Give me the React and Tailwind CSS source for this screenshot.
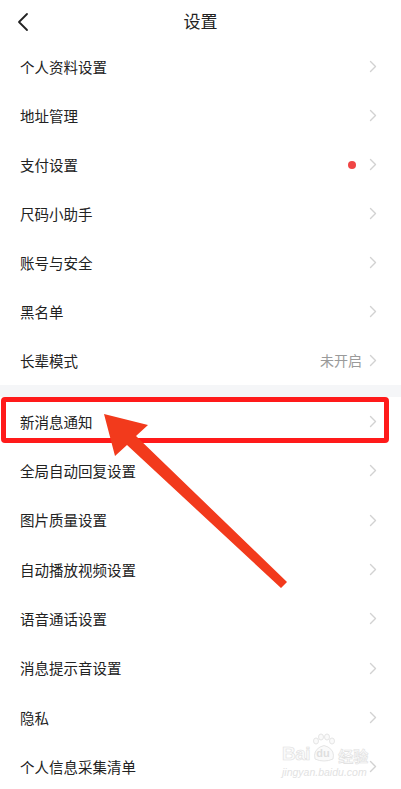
import React from "react";

const font = { fontFamily: '"Noto Sans CJK SC", "Noto Sans", sans-serif' };

function Chevron() {
  return (
    <svg width="8" height="13" viewBox="0 0 8 13" className="shrink-0">
      <path d="M1.5 1.5 L6.5 6.5 L1.5 11.5" fill="none" stroke="#d2d2d2" strokeWidth="1.4" strokeLinecap="round" strokeLinejoin="round" />
    </svg>
  );
}

function Row({ label, right, tall }) {
  return (
    <div className={(tall ? "h-[49.3px]" : "h-[49px]") + " flex items-center justify-between pl-5 pr-[24px] bg-white"}>
      <span className="text-[14.5px] text-[#222222]">{label}</span>
      <div className="flex items-center gap-[13px]">
        {right}
        <Chevron />
      </div>
    </div>
  );
}

export default function App() {
  const lower = ["新消息通知", "全局自动回复设置", "图片质量设置", "自动播放视频设置", "语音通话设置", "消息提示音设置", "隐私", "个人信息采集清单"];
  return (
    <div className="relative w-[401px] h-[789px] overflow-hidden bg-white" style={font}>
      <div className="h-[42px] flex items-center relative">
        <svg width="12" height="20" viewBox="0 0 12 20" className="ml-[17px] mt-[2px]">
          <path d="M10 2 L2 10 L10 18" fill="none" stroke="#222" strokeWidth="1.8" strokeLinecap="round" strokeLinejoin="round" />
        </svg>
        <span className="absolute left-0 right-0 top-[9px] text-center text-[17px] leading-[24px] text-[#222222] pointer-events-none">设置</span>
      </div>
      <Row label="个人资料设置" />
      <Row label="地址管理" />
      <Row label="支付设置" right={<span className="w-2 h-2 rounded-full bg-[#f04545]" />} />
      <Row label="尺码小助手" />
      <Row label="账号与安全" />
      <Row label="黑名单" />
      <Row label="长辈模式" right={<span className="text-[14px] text-[#9a9a9a] -mr-[6px]">未开启</span>} />
      <div className="h-[12px] bg-[#f5f6f8]" />
      {lower.map((l) => (
        <Row key={l} label={l} tall />
      ))}

      {/* red highlight box */}
      <div className="absolute left-[1px] top-[397px] w-[388px] h-[46px] border-[5px] border-[#ff1a1a] rounded-[4px]" />

      {/* arrow */}
      <svg className="absolute left-0 top-0" width="401" height="789" viewBox="0 0 401 789">
        <polygon
          points="104,414 148,425 136,436 287,582 281,588 127,445 115,456"
          fill="#f23a1c"
        />
      </svg>

      {/* watermark */}
      <div className="absolute left-[282px] top-[733px] w-[95px] h-[48px] opacity-90 text-[#e6e6e6]" style={{ fontFamily: '"Liberation Sans", "Noto Sans CJK SC", sans-serif' }}>
        <div className="flex items-end h-[30px]">
          <span className="text-[19px] font-bold leading-none tracking-tight" style={{ WebkitTextStroke: "0.6px #dcdcdc", color: "#fafafa" }}>Bai</span>
          <div className="relative w-[26px] h-[30px] mx-[1px]">
            <svg width="26" height="30" viewBox="0 0 26 30" className="absolute left-0 top-0">
              <g fill="#fafafa" stroke="#dcdcdc" strokeWidth="0.8">
                <ellipse cx="5" cy="8" rx="2.5" ry="3" />
                <ellipse cx="10" cy="4" rx="2.5" ry="3" />
                <ellipse cx="16" cy="4" rx="2.5" ry="3" />
                <ellipse cx="21" cy="8" rx="2.5" ry="3" />
                <path d="M4 26 Q2 18 9 14 Q13 11 17 14 Q24 18 22 26 Q13 30 4 26 Z" />
              </g>
            </svg>
            <span className="absolute left-[5px] top-[15px] text-[11px] font-bold leading-none text-[#dcdcdc]">du</span>
          </div>
          <span className="text-[15px] font-bold leading-none" style={{ WebkitTextStroke: "0.6px #dcdcdc", color: "#fafafa", fontFamily: '"Noto Sans CJK SC", sans-serif' }}>经验</span>
        </div>
        <div className="text-[10.5px] leading-none mt-[4px] text-[#e0e0e0] italic">jingyan.baidu.com</div>
      </div>
    </div>
  );
}
